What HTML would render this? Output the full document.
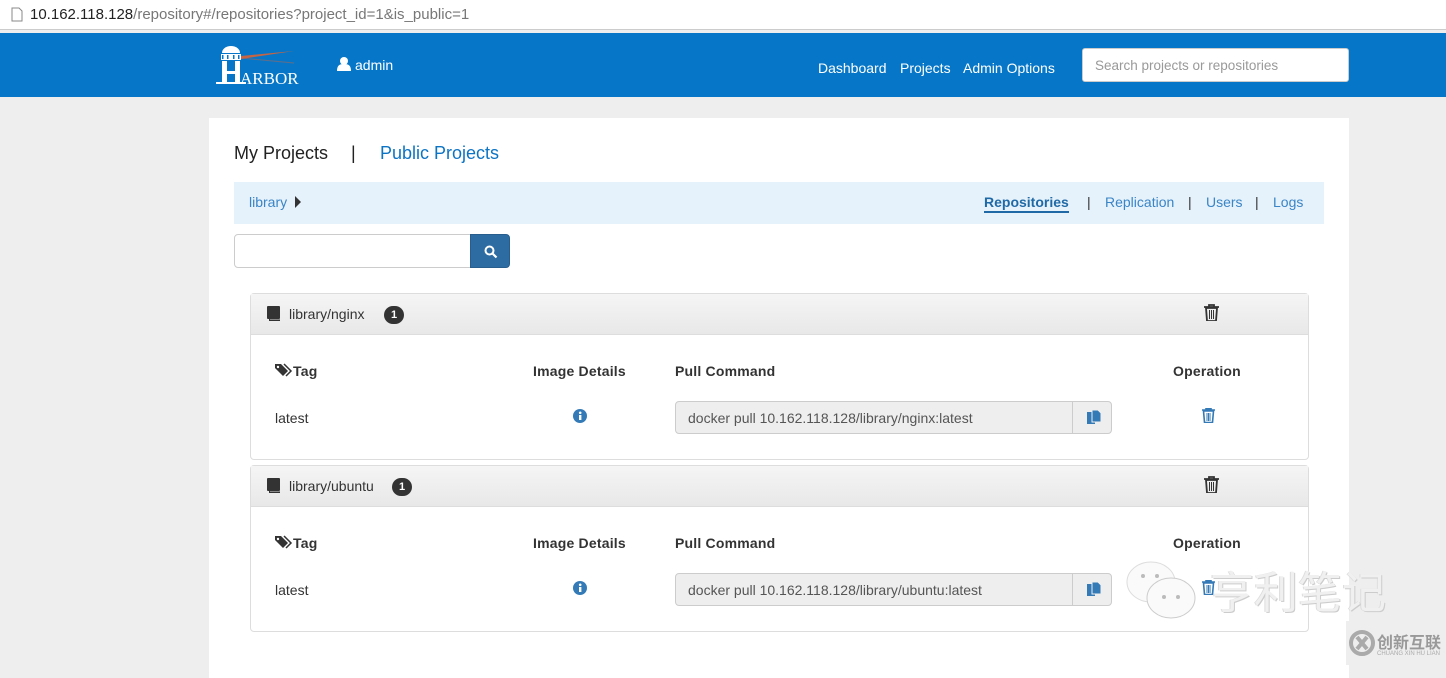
<!DOCTYPE html>
<html><head><meta charset="utf-8"><style>
*{box-sizing:border-box;margin:0;padding:0}
body{width:1446px;height:665px;overflow:hidden;background:#eee;font-family:"Liberation Sans",Arial,sans-serif;color:#333;position:relative}
.abs{position:absolute}
.url{left:0;top:0;width:1446px;height:30px;background:#fff;border-bottom:1px solid #ccc}
.url span{position:absolute;left:30px;top:6px;font-size:15px;color:#777}
.url b{font-weight:normal;color:#222}
.hdr{left:0;top:33px;width:1446px;height:64px;background:#0677c8}
.nav a{position:absolute;color:#fff;font-size:14px;top:27px}
.srch{left:1082px;top:15px;width:267px;height:34px;background:#fff;border-radius:3px;border:1px solid #ccc;font-size:13.5px;color:#999;padding:9px 12px}
.main{left:209px;top:118px;width:1140px;height:560px;background:#fff}
.panel{position:absolute;left:250px;width:1059px;border:1px solid #ddd;border-radius:4px;background:#fff}
.ph{height:41px;background:linear-gradient(#f5f5f5,#e8e8e8);border-bottom:1px solid #ddd;position:relative}
.t{position:absolute;font-size:14px}
.th{font-weight:bold;font-size:14px;position:absolute;letter-spacing:.2px}
.badge{position:absolute;width:20px;height:18px;border-radius:9px;background:#333;color:#fff;font-size:11px;font-weight:bold;text-align:center;line-height:18px}
.cmd{position:absolute;left:424px;width:437px;height:33px;border:1px solid #ccc;border-radius:4px;background:#eee}
.cmd span{position:absolute;left:12px;top:8px;font-size:14px;color:#555}
.cmd i{position:absolute;left:396px;top:0;width:1px;height:31px;background:#ccc}
</style></head><body>
<div class="abs url"><svg class="abs" style="left:11px;top:7px" width="12" height="15"><path d="M1 1h7l3 3v10H1z" fill="none" stroke="#888"/></svg><span><b>10.162.118.128</b>/repository#/repositories?project_id=1&amp;is_public=1</span></div>
<div class="abs hdr">
 <svg class="abs" style="left:214px;top:8px" width="95" height="50">
  <path d="M8 12a9 7 0 0 1 18 0z" fill="#fff"/><rect x="7" y="13" width="20" height="6" fill="#fff"/>
  <rect x="8" y="14" width="1.5" height="4" fill="#0677c8"/><rect x="13" y="14" width="1.5" height="4" fill="#0677c8"/><rect x="19" y="14" width="1.5" height="4" fill="#0677c8"/><rect x="24" y="14" width="1.5" height="4" fill="#0677c8"/>
  <rect x="8" y="20" width="5" height="22" fill="#fff"/><rect x="21" y="20" width="5" height="22" fill="#fff"/>
  <rect x="8" y="30" width="18" height="3" fill="#fff"/>
  <rect x="2" y="41" width="30" height="2" fill="#fff"/>
  <path d="M27 15L80 10L27 18z" fill="#e8602a" opacity=".85"/>
  <path d="M27 17L80 22" stroke="#e8602a" opacity=".4"/>
  <text x="26" y="43" fill="#fff" font-family="Liberation Serif" font-size="17">ARBOR</text>
 </svg>
 <svg class="abs" style="left:337px;top:23px" width="14" height="15"><circle cx="7" cy="5" r="4" fill="#fff"/><path d="M0 15c0-6 3-7 7-7s7 1 7 7z" fill="#fff"/></svg>
 <span class="abs" style="left:355px;top:24px;color:#fff;font-size:14px">admin</span>
 <div class="nav"><a style="left:818px">Dashboard</a><a style="left:900px">Projects</a><a style="left:963px">Admin Options</a></div>
 <div class="abs srch">Search projects or repositories</div>
</div>
<div class="abs main"></div>
<span class="abs" style="left:234px;top:143px;font-size:18px;color:#222">My Projects</span>
<span class="abs" style="left:351px;top:143px;font-size:18px;color:#222">|</span>
<span class="abs" style="left:380px;top:143px;font-size:18px;color:#0c74c4">Public Projects</span>
<div class="abs" style="left:234px;top:182px;width:1090px;height:42px;background:#e5f1fb"></div>
<span class="abs" style="left:249px;top:194px;font-size:14px;color:#3a85c6">library</span>
<svg class="abs" style="left:294px;top:196px" width="8" height="12"><path d="M1 0l6 6-6 6z" fill="#333"/></svg>
<span class="abs" style="left:984px;top:194px;font-size:14px;font-weight:bold;color:#1f6aa6;border-bottom:2px solid #1f6aa6;padding-bottom:1px">Repositories</span>
<span class="abs" style="left:1087px;top:194px;font-size:14px;color:#333">|</span>
<span class="abs" style="left:1105px;top:194px;font-size:14px;color:#3a85c6">Replication</span>
<span class="abs" style="left:1188px;top:194px;font-size:14px;color:#333">|</span>
<span class="abs" style="left:1206px;top:194px;font-size:14px;color:#3a85c6">Users</span>
<span class="abs" style="left:1255px;top:194px;font-size:14px;color:#333">|</span>
<span class="abs" style="left:1273px;top:194px;font-size:14px;color:#3a85c6">Logs</span>
<div class="abs" style="left:234px;top:234px;width:237px;height:34px;border:1px solid #ccc;border-radius:4px 0 0 4px;background:#fff"></div>
<div class="abs" style="left:470px;top:234px;width:40px;height:34px;background:#2d6ca2;border-radius:0 4px 4px 0;border:1px solid #285e8e"><svg style="margin:10px 0 0 13px" width="14" height="14"><circle cx="5.5" cy="5.5" r="4" fill="none" stroke="#fff" stroke-width="2"/><path d="M8.5 8.5l4 4" stroke="#fff" stroke-width="2.2"/></svg></div>

<div class="panel" style="top:293px;height:167px">
 <div class="ph"><svg class="abs" style="left:16px;top:12px" width="13" height="15"><rect x="0" y="0" width="13" height="13" rx="1" fill="#333"/><rect x="2" y="13" width="11" height="2" fill="#333"/><rect x="3" y="13" width="10" height="1" fill="#888"/></svg>
 <span class="t" style="left:38px;top:12px">library/nginx</span><div class="badge" style="left:133px;top:12px">1</div>
 <svg class="abs" style="left:953px;top:10px" width="15" height="17"><path d="M0 3h15M5 3V1h5v2M2 4h11l-1 13H3z" fill="none" stroke="#333" stroke-width="1.8"/><path d="M5.5 6v9M7.5 6v9M9.5 6v9" stroke="#333"/></svg></div>
 <svg class="abs" style="left:24px;top:69px" width="18" height="14"><path d="M0 1h6l7 7-5 5-8-8z" fill="#333"/><path d="M9 1l7 7-5 5" fill="none" stroke="#333" stroke-width="1.5"/><circle cx="3" cy="4" r="1.2" fill="#fff"/></svg>
 <span class="th" style="left:42px;top:69px">Tag</span><span class="th" style="left:282px;top:69px">Image Details</span><span class="th" style="left:424px;top:69px">Pull Command</span><span class="th" style="left:922px;top:69px">Operation</span>
 <span class="t" style="left:24px;top:116px">latest</span>
 <svg class="abs" style="left:322px;top:115px" width="14" height="14"><circle cx="7" cy="7" r="7" fill="#337ab7"/><rect x="6" y="6" width="2.4" height="5" fill="#fff"/><circle cx="7.2" cy="3.8" r="1.3" fill="#fff"/></svg>
 <div class="cmd" style="top:107px"><span>docker pull 10.162.118.128/library/nginx:latest</span><i></i><svg class="abs" style="left:411px;top:8px" width="14" height="15"><rect x="0" y="2" width="8" height="12" fill="#337ab7"/><path d="M5 0h6l3 3v9H5z" fill="#337ab7" stroke="#eee"/></svg></div>
 <svg class="abs" style="left:951px;top:114px" width="13" height="15"><path d="M0 2h13M4 2V0.5h5V2M1.5 3h10l-1 11.5h-8z" fill="none" stroke="#337ab7" stroke-width="1.6"/><path d="M5 5v8M6.5 5v8M8 5v8" stroke="#337ab7"/></svg>
</div>

<div class="panel" style="top:465px;height:167px">
 <div class="ph"><svg class="abs" style="left:16px;top:12px" width="13" height="15"><rect x="0" y="0" width="13" height="13" rx="1" fill="#333"/><rect x="2" y="13" width="11" height="2" fill="#333"/><rect x="3" y="13" width="10" height="1" fill="#888"/></svg>
 <span class="t" style="left:38px;top:12px">library/ubuntu</span><div class="badge" style="left:141px;top:12px">1</div>
 <svg class="abs" style="left:953px;top:10px" width="15" height="17"><path d="M0 3h15M5 3V1h5v2M2 4h11l-1 13H3z" fill="none" stroke="#333" stroke-width="1.8"/><path d="M5.5 6v9M7.5 6v9M9.5 6v9" stroke="#333"/></svg></div>
 <svg class="abs" style="left:24px;top:69px" width="18" height="14"><path d="M0 1h6l7 7-5 5-8-8z" fill="#333"/><path d="M9 1l7 7-5 5" fill="none" stroke="#333" stroke-width="1.5"/><circle cx="3" cy="4" r="1.2" fill="#fff"/></svg>
 <span class="th" style="left:42px;top:69px">Tag</span><span class="th" style="left:282px;top:69px">Image Details</span><span class="th" style="left:424px;top:69px">Pull Command</span><span class="th" style="left:922px;top:69px">Operation</span>
 <span class="t" style="left:24px;top:116px">latest</span>
 <svg class="abs" style="left:322px;top:115px" width="14" height="14"><circle cx="7" cy="7" r="7" fill="#337ab7"/><rect x="6" y="6" width="2.4" height="5" fill="#fff"/><circle cx="7.2" cy="3.8" r="1.3" fill="#fff"/></svg>
 <div class="cmd" style="top:107px"><span>docker pull 10.162.118.128/library/ubuntu:latest</span><i></i><svg class="abs" style="left:411px;top:8px" width="14" height="15"><rect x="0" y="2" width="8" height="12" fill="#337ab7"/><path d="M5 0h6l3 3v9H5z" fill="#337ab7" stroke="#eee"/></svg></div>
 <svg class="abs" style="left:951px;top:114px" width="13" height="15"><path d="M0 2h13M4 2V0.5h5V2M1.5 3h10l-1 11.5h-8z" fill="none" stroke="#337ab7" stroke-width="1.6"/><path d="M5 5v8M6.5 5v8M8 5v8" stroke="#337ab7"/></svg>
</div>

<svg class="abs" style="left:1126px;top:560px" width="75" height="62"><ellipse cx="25" cy="22" rx="24" ry="20" fill="#fafafa" stroke="#ddd"/><ellipse cx="45" cy="38" rx="24" ry="20" fill="#fafafa" stroke="#ccc"/><circle cx="38" cy="37" r="2" fill="#bbb"/><circle cx="52" cy="37" r="2" fill="#bbb"/><circle cx="17" cy="16" r="2" fill="#bbb"/><circle cx="31" cy="16" r="2" fill="#bbb"/></svg>
<span class="abs" style="left:1210px;top:564px;font-size:44px;color:#f0f0f0;font-family:'Noto Sans CJK SC',sans-serif;line-height:50px;text-shadow:1px 1px 0 #ccc,-1px 0 0 #ddd">亨利笔记</span>
<div class="abs" style="left:1346px;top:621px;width:100px;height:44px;background:#eee"></div>
<svg class="abs" style="left:1349px;top:630px" width="26" height="26"><circle cx="13" cy="13" r="11" fill="none" stroke="#aaa" stroke-width="4"/><path d="M8 7l10 12M18 7L8 19" stroke="#aaa" stroke-width="4"/></svg>
<span class="abs" style="left:1377px;top:632px;font-size:16px;color:#999;font-family:'Noto Sans CJK SC',sans-serif;font-weight:bold;line-height:18px">创新互联</span>
<span class="abs" style="left:1377px;top:651px;font-size:6px;color:#aaa">CHUANG XIN HU LIAN</span>
</body></html>
